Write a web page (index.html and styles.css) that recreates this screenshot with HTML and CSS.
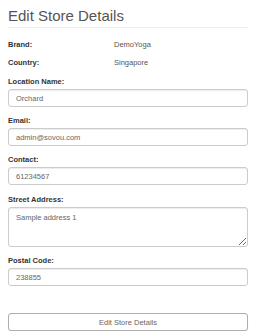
FILE: index.html
```html
<!DOCTYPE html>
<html>
<head>
<meta charset="utf-8">
<link rel="stylesheet" href="styles.css">
</head>
<body>
<div class="page">
  <h1 class="title">Edit Store Details</h1>
  <div class="info-row first"><span class="info-label">Brand:</span><span class="info-value">DemoYoga</span></div>
  <div class="info-row"><span class="info-label">Country:</span><span class="info-value">Singapore</span></div>
  <div class="field">
    <label class="label">Location Name:</label>
    <input class="control" type="text" value="Orchard">
  </div>
  <div class="field">
    <label class="label">Email:</label>
    <input class="control" type="text" value="admin@sovou.com">
  </div>
  <div class="field">
    <label class="label">Contact:</label>
    <input class="control" type="text" value="61234567">
  </div>
  <div class="field wide-gap">
    <label class="label">Street Address:</label>
    <textarea class="control area">Sample address 1</textarea>
  </div>
  <div class="field">
    <label class="label">Postal Code:</label>
    <input class="control" type="text" value="238855">
  </div>
  <button class="submit">Edit Store Details</button>
</div>
</body>
</html>
```
FILE: styles.css
```css
* { box-sizing: border-box; }
html, body { margin: 0; padding: 0; background: #fff; }
body { font-family: "Liberation Sans", Arial, sans-serif; color: #333; }
.page { padding: 0 8px; display: flex; flex-direction: column; }
.title {
  margin: 0;
  padding-top: 7px;
  padding-bottom: 3px;
  font-size: 15px;
  font-weight: normal;
  color: #555;
  line-height: 17px;
  border-bottom: 1px solid #eee;
}
.info-row { display: flex; font-size: 7.5px; line-height: 11px; margin-top: 7px; }
.info-row.first { margin-top: 11px; }
.info-label { width: 106px; font-weight: bold; color: #333; }
.info-value { color: #555; }
.field { display: flex; flex-direction: column; margin-top: 8px; }
.field.wide-gap { margin-top: 9px; }
.label { font-size: 7.5px; line-height: 11px; font-weight: bold; color: #333; margin-bottom: 2px; }
.control {
  width: 100%;
  height: 18px;
  border: 1px solid #ccc;
  border-radius: 3px;
  padding: 0 7px;
  font-family: "Liberation Sans", Arial, sans-serif;
  font-size: 7.5px;
  color: #666;
  background: #fff;
  box-shadow: inset 0 1px 1px rgba(0,0,0,0.075);
}
.area { height: 40px; padding: 4px 7px; resize: vertical; line-height: 11px; }
.submit {
  margin-top: 27px;
  width: 100%;
  height: 18px;
  border: 1px solid #adadad;
  border-radius: 3px;
  background: #fff;
  font-family: "Liberation Sans", Arial, sans-serif;
  font-size: 7.5px;
  color: #666;
  padding: 0;
  box-shadow: 0 1px 1px rgba(0,0,0,0.08);
}
```
